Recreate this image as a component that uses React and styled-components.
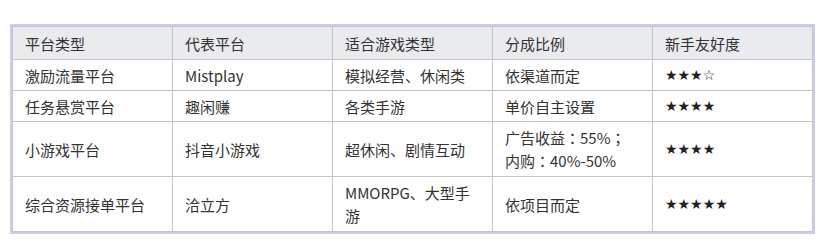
import styled, { createGlobalStyle } from 'styled-components'

const GlobalStyle = createGlobalStyle`
  body {
    margin: 0;
    background: #ffffff;
    font-family: "Noto Sans CJK SC", "Noto Sans", sans-serif;
  }
`

const Page = styled.div`
  padding: 24px 0 0 10px;
`

const Frame = styled.div`
  display: inline-block;
  border: 2px solid #c9cdf2;
`

const Table = styled.table`
  border-collapse: collapse;
  table-layout: fixed;
  width: 801px;
  color: #333333;
  font-size: 15px;
  line-height: 23px;
`

const HeadCell = styled.th`
  background: #e9ebef;
  font-weight: normal;
  text-align: left;
  padding: 5px 12px 4px 12px;
  border: 1px solid #c4c4c4;
`

const Cell = styled.td`
  text-align: left;
  vertical-align: middle;
  padding: ${(p) => (p.$tall ? '4px 12px' : '4px 12px 3px 12px')};
  border: 1px solid #c4c4c4;
  font-family: ${(p) =>
    p.$stars ? '"DejaVu Sans", sans-serif' : 'inherit'};
  font-size: ${(p) => (p.$stars ? '14px' : '15px')};
  color: ${(p) => (p.$stars ? '#222222' : '#333333')};
  word-break: break-all;
`

// full-width colon / semicolon sit centred in the reference
const Punct = styled.span`
  font-family: "Noto Sans CJK TC", "Noto Sans CJK SC", sans-serif;
`

const withPunct = (text) =>
  text.split(/([：；])/).map((part, i) =>
    part === '：' || part === '；' ? <Punct key={i}>{part}</Punct> : part,
  )

const headers = ['平台类型', '代表平台', '适合游戏类型', '分成比例', '新手友好度']

const rows = [
  {
    type: '激励流量平台',
    platform: 'Mistplay',
    games: '模拟经营、休闲类',
    share: ['依渠道而定'],
    stars: '★★★☆',
  },
  {
    type: '任务悬赏平台',
    platform: '趣闲赚',
    games: '各类手游',
    share: ['单价自主设置'],
    stars: '★★★★',
  },
  {
    type: '小游戏平台',
    platform: '抖音小游戏',
    games: '超休闲、剧情互动',
    share: ['广告收益：55%；', '内购：40%-50%'],
    stars: '★★★★',
    tall: true,
  },
  {
    type: '综合资源接单平台',
    platform: '洽立方',
    games: 'MMORPG、大型手游',
    share: ['依项目而定'],
    stars: '★★★★★',
    tall: true,
  },
]

export default function App() {
  return (
    <Page>
      <GlobalStyle />
      <Frame>
        <Table>
          <thead>
            <tr>
              {headers.map((h) => (
                <HeadCell key={h}>{h}</HeadCell>
              ))}
            </tr>
          </thead>
          <tbody>
            {rows.map((r) => (
              <tr key={r.type}>
                <Cell $tall={r.tall}>{r.type}</Cell>
                <Cell $tall={r.tall}>{r.platform}</Cell>
                <Cell $tall={r.tall}>{r.games}</Cell>
                <Cell $tall={r.tall}>
                  {r.share.map((s, i) => (
                    <div key={i}>{withPunct(s)}</div>
                  ))}
                </Cell>
                <Cell $tall={r.tall} $stars>
                  {r.stars}
                </Cell>
              </tr>
            ))}
          </tbody>
        </Table>
      </Frame>
    </Page>
  )
}
